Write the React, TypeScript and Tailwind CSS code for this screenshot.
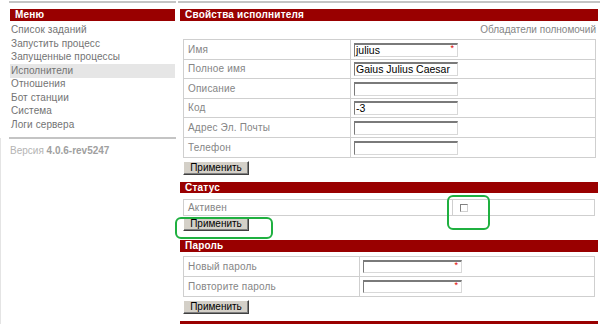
import React from "react";

const font = { fontFamily: '"Liberation Sans", Arial, sans-serif' };

function Bar({ title, h = "h-[12px]" }: { title: string; h?: string }) {
  return (
    <div className={`${h} bg-[#990000] text-white font-bold text-[10px] leading-none flex items-center pl-[5px] tracking-[0.2px]`}>
      {title}
    </div>
  );
}

function Btn() {
  return (
    <div className="w-[66px] h-[14px] bg-[#d4d0c8] border-t border-l border-t-white border-l-white border-b border-r border-b-[#404040] border-r-[#404040] shadow-[inset_-1px_-1px_0_#808080] flex items-center justify-center text-[10px] leading-none text-black">
      Применить
    </div>
  );
}

function Input({ value = "", req = false, w = "w-[104px]", h = "h-[14px]" }: { value?: string; req?: boolean; w?: string; h?: string }) {
  return (
    <div className={`relative ${w} ${h} bg-white border-t-2 border-l border-t-[#7a7a7a] border-l-[#7a7a7a] border-b border-r border-b-[#d8d8d8] border-r-[#d8d8d8] flex items-center pl-[1px] text-[10.5px] leading-none text-black`}>
      {value}
      {req && <span className="absolute right-[3px] top-[-1px] text-[9px] text-[#e00000] leading-none">*</span>}
    </div>
  );
}

function Row({ label, children, div, h = "h-[19.5px]", last = false }: { label: string; children?: React.ReactNode; div: string; h?: string; last?: boolean }) {
  return (
    <div className={`flex ${h} ${last ? "" : "border-b border-[#cfcfcf]"}`}>
      <div className={`${div} border-r border-[#cfcfcf] flex items-center pl-[4px] text-[10px] text-[#858585] leading-none tracking-[0.2px]`}>{label}</div>
      <div className="flex-1 flex items-center pl-[3px]">{children}</div>
    </div>
  );
}

export default function App() {
  const items = ["Список заданий", "Запустить процесс", "Запущенные процессы", "Исполнители", "Отношения", "Бот станции", "Система", "Логи сервера"];
  return (
    <div className="relative w-[603px] h-[324px] bg-white overflow-hidden flex" style={font}>
      <div className="absolute left-0 top-[138px] w-px h-[186px] bg-[#e4e4e4]" />
      {/* Sidebar */}
      <div className="ml-[9px] w-[167px] pt-[1px] flex flex-col">
        <div className="h-[2px] bg-[#c4c4c4]" />
        <div className="mt-[6px] mx-[1px]">
          <Bar title="Меню" />
        </div>
        <div className="mt-[2.5px] mx-[1px] flex flex-col">
          {items.map((t) => (
            <div key={t} className={`h-[13.5px] flex items-center pl-[1px] text-[10px] leading-none tracking-[0.1px] text-[#737373] ${t === "Исполнители" ? "bg-[#e6e6e6]" : ""}`}>
              {t}
            </div>
          ))}
        </div>
        <div className="mt-[5px] h-[2px] bg-[#c4c4c4]" />
        <div className="mt-[7px] pl-[1px] text-[10px] leading-none text-[#b4b4b4]">
          Версия <span className="font-bold text-[#a0a0a0]">4.0.6-rev5247</span>
        </div>
      </div>
      {/* Main */}
      <div className="ml-[2px] w-[422px] pt-[1px] flex flex-col">
        <div className="h-[2px] bg-[#c4c4c4]" />
        <div className="mt-[6px] mx-[2px]">
          <Bar title="Свойства исполнителя" />
        </div>
        <div className="h-[21px] flex items-center justify-end pr-[4px] text-[10px] leading-none text-[#858585]">Обладатели полномочий</div>
        <div className="ml-[5px] w-[413px] border border-[#cfcfcf]">
          <Row label="Имя" div="w-[167px]"><Input value="julius" req /></Row>
          <Row label="Полное имя" div="w-[167px]"><Input value="Gaius Julius Caesar" /></Row>
          <Row label="Описание" div="w-[167px]"><Input /></Row>
          <Row label="Код" div="w-[167px]"><Input value="-3" /></Row>
          <Row label="Адрес Эл. Почты" div="w-[167px]"><Input /></Row>
          <Row label="Телефон" div="w-[167px]" last><Input /></Row>
        </div>
        <div className="mt-[3px] ml-[5px]"><Btn /></div>
        <div className="mt-[7px] mx-[2px]">
          <Bar title="Статус" h="h-[11px]" />
        </div>
        <div className="mt-[6px] ml-[5px] w-[412px] border border-[#cfcfcf]">
          <Row label="Активен" div="w-[269px]" h="h-[15px]" last>
            <div className="ml-[4px] w-[8px] h-[8px] bg-white border border-t-[#808080] border-l-[#808080] border-b-[#d0d0d0] border-r-[#d0d0d0]" />
          </Row>
        </div>
        <div className="mt-[1px] ml-[5px]"><Btn /></div>
        <div className="mt-[9px] mx-[2px]">
          <Bar title="Пароль" />
        </div>
        <div className="mt-[4px] ml-[5px] w-[412px] border border-[#cfcfcf]">
          <Row label="Новый пароль" div="w-[176px]"><Input req w="w-[99px]" h="h-[13px]" /></Row>
          <Row label="Повторите пароль" div="w-[176px]" last><Input req w="w-[99px]" h="h-[13px]" /></Row>
        </div>
        <div className="mt-[3px] ml-[5px]"><Btn /></div>
        <div className="mt-[7px] mx-[2px] h-[3px] bg-[#990000]" />
      </div>
      {/* Annotations */}
      <div className="absolute left-[175px] top-[217px] w-[98px] h-[22px] border-2 border-[#1fb040] rounded-[6px]" />
      <div className="absolute left-[447px] top-[195px] w-[43px] h-[35px] border-2 border-[#1fb040] rounded-[6px]" />
    </div>
  );
}
